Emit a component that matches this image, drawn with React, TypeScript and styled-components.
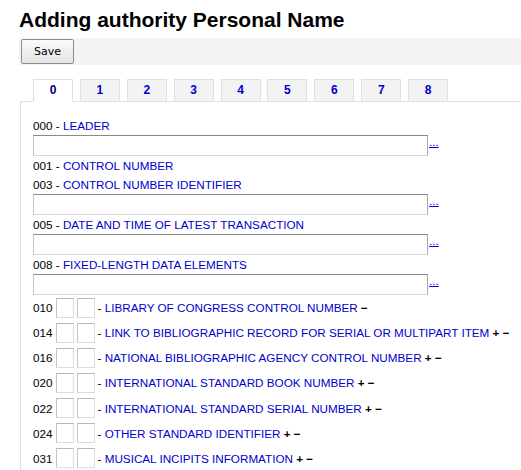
import React from "react";
import styled, { createGlobalStyle } from "styled-components";

const GlobalStyle = createGlobalStyle`
  html, body { margin: 0; padding: 0; background: #fff; }
  body { font-family: "Liberation Sans", Arial, sans-serif; color: #000; }
`;

const Page = styled.div`
  padding: 8px 0 0 19px;
`;

const Title = styled.h1`
  margin: 0;
  font-size: 21px;
  line-height: 24px;
  font-weight: bold;
  color: #000;
`;

const Toolbar = styled.div`
  margin-top: 6px;
  height: 27px;
  box-sizing: border-box;
  padding: 1px 0 1px 2px;
  background: #f3f3f3;
  display: flex;
  align-items: center;
`;

const SaveButton = styled.button`
  width: 53px;
  height: 25px;
  box-sizing: border-box;
  border: 1px solid #8c8c8c;
  border-radius: 2px;
  background: linear-gradient(#fbfbfb, #e4e4e4);
  font-family: "DejaVu Sans", "Liberation Sans", sans-serif;
  font-size: 11px;
  color: #000;
  padding: 0;
`;

const TabsArea = styled.div`
  margin-top: 14px;
  margin-left: 1px;
`;

const TabList = styled.div`
  display: flex;
  gap: 6.9px;
  padding-left: 13px;
  margin-bottom: -1px;
  position: relative;
  z-index: 1;
`;

const Tab = styled.a<{ $active?: boolean }>`
  width: 40px;
  height: 23px;
  box-sizing: border-box;
  border: 1px solid #e0e0e0;
  border-bottom-color: ${(p) => (p.$active ? "#fff" : "#e0e0e0")};
  background: ${(p) => (p.$active ? "#fff" : "#f3f3f3")};
  color: ${(p) => (p.$active ? "#000080" : "#0000cc")};
  font-size: 12px;
  font-weight: bold;
  line-height: 21px;
  text-align: center;
  text-decoration: none;
`;

const Panel = styled.div`
  border-top: 1px solid #e0e0e0;
  border-left: 1px solid #e0e0e0;
  padding: 14px 0 20px 12px;
  font-size: 11.7px;
`;

const FieldLabel = styled.div`
  height: 19px;
  line-height: 19px;
  white-space: pre;
`;

const Link = styled.a`
  color: #0000cc;
  text-decoration: none;
`;

const InputRow = styled.div`
  display: flex;
  align-items: flex-start;
`;

const TextInput = styled.div`
  width: 395px;
  height: 21px;
  box-sizing: border-box;
  background: #fff;
  border-top: 1px solid #8a8a8a;
  border-left: 1px solid #c4c4c4;
  border-right: 1px solid #a8a8a8;
  border-bottom: 1px solid #d8d8d8;
`;

const DotsLink = styled.a`
  color: #0000cc;
  text-decoration: underline;
  line-height: 13px;
  margin-top: 0px;
  padding-left: 1px;
`;

const IndRow = styled.div`
  height: 25.15px;
  display: flex;
  align-items: center;
  gap: 3px;
  white-space: pre;
`;

const IndBox = styled.div`
  width: 18px;
  height: 20px;
  box-sizing: border-box;
  background: #fff;
  border-top: 1px solid #b8b8b8;
  border-left: 1px solid #c4c4c4;
  border-right: 1px solid #dcdcdc;
  border-bottom: 1px solid #dcdcdc;
`;

const PlusMinus = styled.span`
  font-weight: bold;
  color: #000;
`;

const controlFields = [
  { tag: "000", name: "LEADER", input: true },
  { tag: "001", name: "CONTROL NUMBER", input: false },
  { tag: "003", name: "CONTROL NUMBER IDENTIFIER", input: true },
  { tag: "005", name: "DATE AND TIME OF LATEST TRANSACTION", input: true },
  { tag: "008", name: "FIXED-LENGTH DATA ELEMENTS", input: true },
];

const dataFields = [
  { tag: "010", name: "LIBRARY OF CONGRESS CONTROL NUMBER", plus: false },
  { tag: "014", name: "LINK TO BIBLIOGRAPHIC RECORD FOR SERIAL OR MULTIPART ITEM", plus: true },
  { tag: "016", name: "NATIONAL BIBLIOGRAPHIC AGENCY CONTROL NUMBER", plus: true },
  { tag: "020", name: "INTERNATIONAL STANDARD BOOK NUMBER", plus: true },
  { tag: "022", name: "INTERNATIONAL STANDARD SERIAL NUMBER", plus: true },
  { tag: "024", name: "OTHER STANDARD IDENTIFIER", plus: true },
  { tag: "031", name: "MUSICAL INCIPITS INFORMATION", plus: true },
];

export default function App() {
  return (
    <>
      <GlobalStyle />
      <Page>
        <Title>Adding authority Personal Name</Title>
        <Toolbar>
          <SaveButton>Save</SaveButton>
        </Toolbar>
        <TabsArea>
          <TabList>
            {[0, 1, 2, 3, 4, 5, 6, 7, 8].map((n) => (
              <Tab key={n} $active={n === 0}>
                {n}
              </Tab>
            ))}
          </TabList>
          <Panel>
            {controlFields.map((f) => (
              <React.Fragment key={f.tag}>
                <FieldLabel>
                  {f.tag} - <Link>{f.name}</Link>
                </FieldLabel>
                {f.input && (
                  <InputRow>
                    <TextInput />
                    <DotsLink>...</DotsLink>
                  </InputRow>
                )}
              </React.Fragment>
            ))}
            {dataFields.map((f) => (
              <IndRow key={f.tag}>
                <span>{f.tag}</span>
                <IndBox />
                <IndBox />
                <span>
                  - <Link>{f.name}</Link>
                  {f.plus ? (
                    <>
                      {" "}
                      <PlusMinus>+</PlusMinus>
                    </>
                  ) : null}{" "}
                  <PlusMinus>−</PlusMinus>
                </span>
              </IndRow>
            ))}
          </Panel>
        </TabsArea>
      </Page>
    </>
  );
}
